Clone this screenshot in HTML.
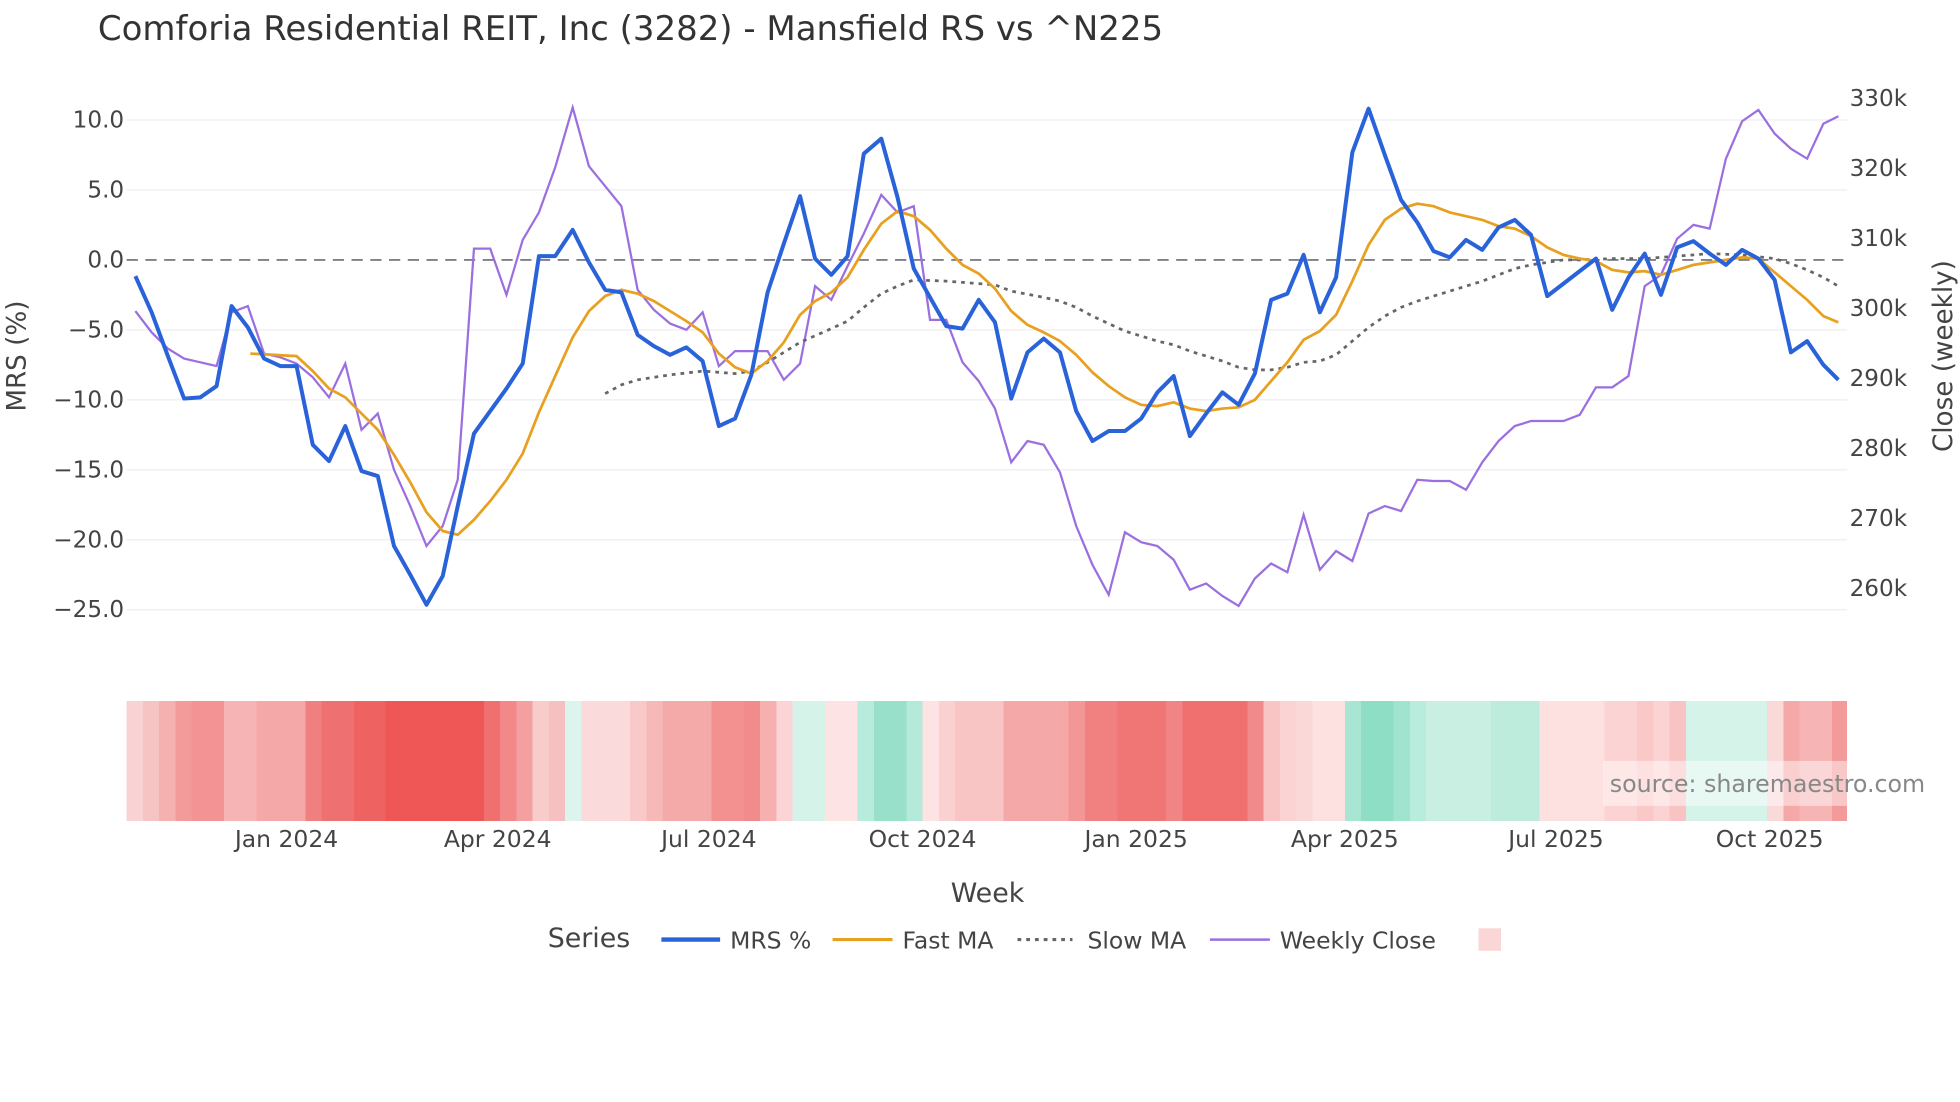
<!DOCTYPE html>
<html><head><meta charset="utf-8"><style>html,body{margin:0;padding:0;background:#fff}svg{display:block}text{font-family:"DejaVu Sans","Liberation Sans",sans-serif}</style></head><body>
<svg width="1960" height="1102" viewBox="0 0 1568 882" xmlns="http://www.w3.org/2000/svg">
<rect width="1568" height="882" fill="#fff"/>
<text x="78" y="32" font-size="27.2" fill="#333">Comforia Residential REIT, Inc (3282) - Mansfield RS vs ^N225</text>
<g stroke="#eceef2" stroke-width="1">
<line x1="101" x2="1478" y1="96" y2="96"/><line x1="101" x2="1478" y1="152" y2="152"/><line x1="101" x2="1478" y1="264" y2="264"/><line x1="101" x2="1478" y1="320" y2="320"/><line x1="101" x2="1478" y1="376" y2="376"/><line x1="101" x2="1478" y1="432" y2="432"/><line x1="101" x2="1478" y1="488" y2="488"/>
</g>
<line x1="101" x2="1478" y1="208" y2="208" stroke="#7f7f8a" stroke-width="1.5" stroke-dasharray="9,6"/>
<g font-size="18.5" fill="#444" text-anchor="end">
<text x="99" y="102">10.0</text><text x="99" y="158">5.0</text><text x="99" y="214">0.0</text><text x="99" y="270">−5.0</text><text x="99" y="326">−10.0</text><text x="99" y="382">−15.0</text><text x="99" y="438">−20.0</text><text x="99" y="494">−25.0</text>
</g>
<g font-size="18.5" fill="#444">
<text x="1480" y="85">330k</text><text x="1480" y="141">320k</text><text x="1480" y="197">310k</text><text x="1480" y="253">300k</text><text x="1480" y="309">290k</text><text x="1480" y="365">280k</text><text x="1480" y="421">270k</text><text x="1480" y="477">260k</text>
</g>
<text transform="translate(20,285) rotate(-90)" font-size="21" fill="#444" text-anchor="middle">MRS (%)</text>
<text transform="translate(1562,285) rotate(-90)" font-size="21" fill="#444" text-anchor="middle">Close (weekly)</text>
<polyline fill="none" stroke="#9b6fe0" stroke-width="1.8" points="108,249 121,266 134,279 147,287 160,290 173,293 185,250 198,245 211,283 224,286 237,291 250,302 263,318 276,291 289,344 302,331 315,376 328,405 341,437 354,421 366,384 379,199 392,199 405,236 418,192 431,170 444,134 458,86 471,133 484,149 497,165 510,232 523,248 536,259 549,264 562,250 575,293 588,281 601,281 614,281 627,304 640,291 652,229 665,240 678,213 691,187 705,156 718,170 731,165 744,256 757,256 770,290 783,305 796,327 809,370 822,353 835,356 848,378 861,421 874,452 887,476 900,426 913,434 926,437 939,448 952,472 965,467 978,477 991,485 1004,463 1017,451 1030,458 1043,412 1056,456 1069,441 1082,449 1095,411 1108,405 1121,409 1134,384 1147,385 1160,385 1173,392 1186,370 1199,353 1212,341 1225,337 1251,337 1264,332 1277,310 1290,310 1303,301 1316,229 1329,220 1342,191 1355,180 1368,183 1381,127 1394,97 1407,88 1420,107 1433,119 1446,127 1459,99 1471,93"/>
<polyline fill="none" stroke="#666" stroke-width="2.2" stroke-dasharray="3,4" points="484,315 497,308 510,304 536,300 562,297 588,299 601,297 614,290 640,274 665,263 678,257 691,246 705,235 718,229 731,224 757,225 783,227 796,228 809,233 835,238 848,241 861,246 874,253 887,259 900,265 913,269 926,273 939,276 952,281 965,285 978,289 991,294 1004,296 1017,296 1030,294 1043,290 1056,289 1069,284 1082,273 1095,262 1108,253 1121,246 1134,241 1147,237 1160,233 1173,229 1186,225 1199,220 1212,215 1225,212 1238,210 1251,208 1264,208 1290,207 1316,207 1342,205 1368,203 1394,204 1420,207 1433,211 1446,216 1459,222 1471,229"/>
<polyline fill="none" stroke="#e8a020" stroke-width="2.2" points="200,283 237,285 250,297 263,311 276,318 289,331 302,344 315,364 328,386 341,410 354,425 366,428 379,416 392,401 405,384 418,363 431,330 444,301 458,270 471,249 484,237 497,232 510,235 523,241 536,249 549,257 562,266 575,283 588,294 601,299 614,289 627,274 640,252 652,241 665,234 678,222 691,200 705,179 718,169 731,173 744,184 757,199 770,212 783,219 796,231 809,249 822,260 835,266 848,273 861,284 874,298 887,309 900,318 913,324 926,325 939,322 952,327 965,329 978,327 991,326 1004,320 1017,305 1030,290 1043,272 1056,265 1069,252 1082,225 1095,196 1108,176 1121,167 1134,163 1147,165 1160,170 1173,173 1186,176 1199,181 1212,183 1225,189 1238,198 1251,204 1264,207 1277,209 1290,216 1303,218 1316,217 1329,220 1342,216 1355,212 1368,210 1381,208 1394,206 1407,207 1420,218 1433,229 1446,240 1459,253 1471,258"/>
<polyline fill="none" stroke="#2962d9" stroke-width="3.2" stroke-linejoin="round" points="108,221 121,250 134,285 147,319 160,318 173,309 185,245 198,262 211,287 224,293 237,293 250,356 263,369 276,341 289,377 302,381 315,437 328,460 341,484 354,461 366,405 379,347 392,329 405,311 418,291 431,205 444,205 458,184 471,210 484,232 497,234 510,268 523,277 536,284 549,278 562,289 575,341 588,335 601,300 614,234 627,195 640,157 652,207 665,220 678,205 691,123 705,111 718,158 731,215 744,238 757,261 770,263 783,240 796,258 809,319 822,282 835,271 848,282 861,329 874,353 887,345 900,345 913,335 926,314 939,301 952,349 965,331 978,314 991,324 1004,299 1017,240 1030,235 1043,204 1056,250 1069,222 1082,122 1095,87 1108,124 1121,160 1134,178 1147,201 1160,206 1173,192 1186,200 1199,182 1212,176 1225,188 1238,237 1251,227 1264,217 1277,207 1290,248 1303,222 1316,203 1329,236 1342,198 1355,193 1368,203 1381,212 1394,200 1407,207 1420,224 1433,282 1446,273 1459,292 1471,304"/>
<g shape-rendering="crispEdges">
<rect x="101" y="561" width="13" height="96" fill="#f9d3d3"/><rect x="114" y="561" width="13" height="96" fill="#f7c4c4"/><rect x="127" y="561" width="13" height="96" fill="#f5b0b0"/><rect x="140" y="561" width="13" height="96" fill="#f39b9b"/><rect x="153" y="561" width="26" height="96" fill="#f39393"/><rect x="179" y="561" width="26" height="96" fill="#f6b4b4"/><rect x="205" y="561" width="39" height="96" fill="#f5a8a8"/><rect x="244" y="561" width="13" height="96" fill="#f07f7f"/><rect x="257" y="561" width="26" height="96" fill="#ef7070"/><rect x="283" y="561" width="25" height="96" fill="#ee6262"/><rect x="308" y="561" width="79" height="96" fill="#ef5656"/><rect x="387" y="561" width="13" height="96" fill="#f07070"/><rect x="400" y="561" width="13" height="96" fill="#f28888"/><rect x="413" y="561" width="13" height="96" fill="#f5a0a0"/><rect x="426" y="561" width="13" height="96" fill="#f9cccc"/><rect x="439" y="561" width="13" height="96" fill="#f7c0c0"/><rect x="452" y="561" width="13" height="96" fill="#dcf5ec"/><rect x="465" y="561" width="39" height="96" fill="#fadada"/><rect x="504" y="561" width="13" height="96" fill="#f9c8c8"/><rect x="517" y="561" width="13" height="96" fill="#f7b8b8"/><rect x="530" y="561" width="39" height="96" fill="#f5aaaa"/><rect x="569" y="561" width="26" height="96" fill="#f39090"/><rect x="595" y="561" width="13" height="96" fill="#f28c8c"/><rect x="608" y="561" width="13" height="96" fill="#f6b0b0"/><rect x="621" y="561" width="13" height="96" fill="#fbd5d5"/><rect x="634" y="561" width="26" height="96" fill="#d6f3e9"/><rect x="660" y="561" width="26" height="96" fill="#fde3e3"/><rect x="686" y="561" width="13" height="96" fill="#b7ebdb"/><rect x="699" y="561" width="26" height="96" fill="#98e0ca"/><rect x="725" y="561" width="13" height="96" fill="#b5eadb"/><rect x="738" y="561" width="13" height="96" fill="#fde3e3"/><rect x="751" y="561" width="13" height="96" fill="#fbd0d0"/><rect x="764" y="561" width="39" height="96" fill="#f9c4c4"/><rect x="803" y="561" width="52" height="96" fill="#f5a8a8"/><rect x="855" y="561" width="13" height="96" fill="#f39696"/><rect x="868" y="561" width="26" height="96" fill="#f18080"/><rect x="894" y="561" width="39" height="96" fill="#f07575"/><rect x="933" y="561" width="13" height="96" fill="#f18585"/><rect x="946" y="561" width="52" height="96" fill="#f07070"/><rect x="998" y="561" width="13" height="96" fill="#f18a8a"/><rect x="1011" y="561" width="13" height="96" fill="#f9c4c4"/><rect x="1024" y="561" width="13" height="96" fill="#fbd3d3"/><rect x="1037" y="561" width="13" height="96" fill="#fbd8d8"/><rect x="1050" y="561" width="26" height="96" fill="#fde0e0"/><rect x="1076" y="561" width="13" height="96" fill="#a8e6d3"/><rect x="1089" y="561" width="26" height="96" fill="#8ddec5"/><rect x="1115" y="561" width="13" height="96" fill="#a0e4cf"/><rect x="1128" y="561" width="13" height="96" fill="#b8ecdc"/><rect x="1141" y="561" width="52" height="96" fill="#c9efe3"/><rect x="1193" y="561" width="39" height="96" fill="#bdebdc"/><rect x="1232" y="561" width="52" height="96" fill="#fde0e0"/><rect x="1284" y="561" width="26" height="96" fill="#fbd3d3"/><rect x="1310" y="561" width="13" height="96" fill="#fbc8c8"/><rect x="1323" y="561" width="13" height="96" fill="#fbd3d3"/><rect x="1336" y="561" width="13" height="96" fill="#f9c3c3"/><rect x="1349" y="561" width="65" height="96" fill="#d6f3ea"/><rect x="1414" y="561" width="13" height="96" fill="#fad9d9"/><rect x="1427" y="561" width="13" height="96" fill="#f5a8a8"/><rect x="1440" y="561" width="26" height="96" fill="#f7b4b4"/><rect x="1466" y="561" width="12" height="96" fill="#f39a9a"/>
</g>
<rect x="1283" y="609" width="195" height="36" fill="#fff" fill-opacity="0.45"/>
<text x="1288" y="634" font-size="19" fill="#888">source: sharemaestro.com</text>
<g font-size="18.8" fill="#444" text-anchor="middle">
<text x="229" y="678">Jan 2024</text><text x="398" y="678">Apr 2024</text><text x="567" y="678">Jul 2024</text><text x="738" y="678">Oct 2024</text><text x="909" y="678">Jan 2025</text><text x="1076" y="678">Apr 2025</text><text x="1245" y="678">Jul 2025</text><text x="1416" y="678">Oct 2025</text>
</g>
<text x="790" y="722" font-size="21.5" fill="#444" text-anchor="middle">Week</text>
<text x="438" y="758" font-size="21.5" fill="#444">Series</text>
<line x1="529" x2="576" y1="752" y2="752" stroke="#2962d9" stroke-width="3.5"/>
<text x="584" y="759" font-size="18.8" fill="#444">MRS %</text>
<line x1="666" x2="714" y1="752" y2="752" stroke="#e8a020" stroke-width="2.5"/>
<text x="722" y="759" font-size="18.8" fill="#444">Fast MA</text>
<line x1="814" x2="858" y1="752" y2="752" stroke="#666" stroke-width="2.5" stroke-dasharray="3,4"/>
<text x="870" y="759" font-size="18.8" fill="#444">Slow MA</text>
<line x1="968" x2="1016" y1="752" y2="752" stroke="#9b6fe0" stroke-width="2"/>
<text x="1024" y="759" font-size="18.8" fill="#444">Weekly Close</text>
<rect x="1183" y="743" width="18" height="18" fill="#fad6d6"/>
</svg>
</body></html>
